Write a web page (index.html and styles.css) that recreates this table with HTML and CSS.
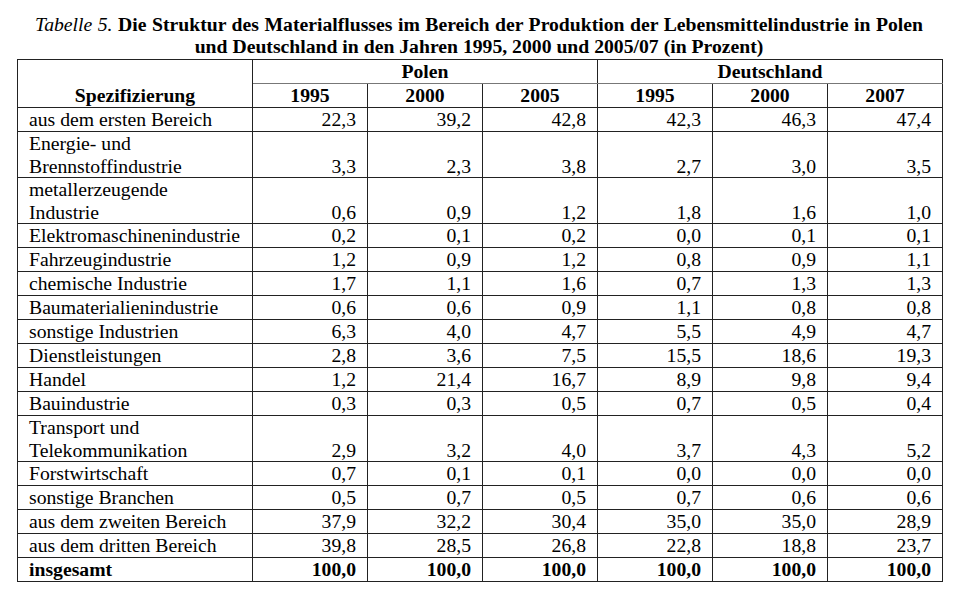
FILE: index.html
```html
<!DOCTYPE html>
<html lang="de">
<head>
<meta charset="utf-8">
<title>Tabelle 5</title>
<link rel="stylesheet" href="styles.css">
</head>
<body>
<div class="page">
  <div class="caption">
    <p class="cap-line cap-first"><span class="cap-label">Tabelle 5.</span> Die Struktur des Materialflusses im Bereich der Produktion der Lebensmittelindustrie in Polen</p>
    <p class="cap-line cap-last">und Deutschland in den Jahren 1995, 2000 und 2005/07 (in Prozent)</p>
  </div>
  <table class="data">
    <colgroup>
      <col class="c-label">
      <col class="c-num"><col class="c-num"><col class="c-num">
      <col class="c-num"><col class="c-num"><col class="c-num">
    </colgroup>
    <thead>
      <tr class="h1">
        <th rowspan="2" class="spec">Spezifizierung</th>
        <th colspan="3" class="grp">Polen</th>
        <th colspan="3" class="grp">Deutschland</th>
      </tr>
      <tr class="h2">
        <th class="yr">1995</th><th class="yr soft">2000</th><th class="yr">2005</th>
        <th class="yr">1995</th><th class="yr">2000</th><th class="yr">2007</th>
      </tr>
    </thead>
    <tbody>
      <tr><td>aus dem ersten Bereich</td><td>22,3</td><td>39,2</td><td>42,8</td><td>42,3</td><td>46,3</td><td>47,4</td></tr>
      <tr class="dbl"><td>Energie- und<br>Brennstoffindustrie</td><td>3,3</td><td>2,3</td><td>3,8</td><td>2,7</td><td>3,0</td><td>3,5</td></tr>
      <tr class="dbl"><td>metallerzeugende<br>Industrie</td><td>0,6</td><td>0,9</td><td>1,2</td><td>1,8</td><td>1,6</td><td>1,0</td></tr>
      <tr><td>Elektromaschinenindustrie</td><td>0,2</td><td>0,1</td><td>0,2</td><td>0,0</td><td>0,1</td><td>0,1</td></tr>
      <tr><td>Fahrzeugindustrie</td><td>1,2</td><td>0,9</td><td>1,2</td><td>0,8</td><td>0,9</td><td>1,1</td></tr>
      <tr><td>chemische Industrie</td><td>1,7</td><td>1,1</td><td>1,6</td><td>0,7</td><td>1,3</td><td>1,3</td></tr>
      <tr><td>Baumaterialienindustrie</td><td>0,6</td><td>0,6</td><td>0,9</td><td>1,1</td><td>0,8</td><td>0,8</td></tr>
      <tr><td>sonstige Industrien</td><td>6,3</td><td>4,0</td><td>4,7</td><td>5,5</td><td>4,9</td><td>4,7</td></tr>
      <tr><td>Dienstleistungen</td><td>2,8</td><td>3,6</td><td>7,5</td><td>15,5</td><td>18,6</td><td>19,3</td></tr>
      <tr><td>Handel</td><td>1,2</td><td>21,4</td><td>16,7</td><td>8,9</td><td>9,8</td><td>9,4</td></tr>
      <tr><td>Bauindustrie</td><td>0,3</td><td>0,3</td><td>0,5</td><td>0,7</td><td>0,5</td><td>0,4</td></tr>
      <tr class="dbl"><td>Transport und<br>Telekommunikation</td><td>2,9</td><td>3,2</td><td>4,0</td><td>3,7</td><td>4,3</td><td>5,2</td></tr>
      <tr><td>Forstwirtschaft</td><td>0,7</td><td>0,1</td><td>0,1</td><td>0,0</td><td>0,0</td><td>0,0</td></tr>
      <tr><td>sonstige Branchen</td><td>0,5</td><td>0,7</td><td>0,5</td><td>0,7</td><td>0,6</td><td>0,6</td></tr>
      <tr><td>aus dem zweiten Bereich</td><td>37,9</td><td>32,2</td><td>30,4</td><td>35,0</td><td>35,0</td><td>28,9</td></tr>
      <tr><td>aus dem dritten Bereich</td><td>39,8</td><td>28,5</td><td>26,8</td><td>22,8</td><td>18,8</td><td>23,7</td></tr>
      <tr class="total"><td>insgesamt</td><td>100,0</td><td>100,0</td><td>100,0</td><td>100,0</td><td>100,0</td><td>100,0</td></tr>
    </tbody>
  </table>
</div>
</body>
</html>
```

FILE: styles.css
```css
html, body {
  margin: 0;
  padding: 0;
  background: #ffffff;
}

body {
  font-family: "Liberation Serif", serif;
  font-size: 19.7px;
  color: #000000;
}

.page {
  width: 923px;
  margin: 0 0 0 17px;
  padding-top: 13px;
}

.caption {
  margin: 0 17px 2px 18px;
  font-weight: bold;
  line-height: 22px;
}

.cap-line {
  margin: 0;
  white-space: nowrap;
}

.cap-first {
  text-align: justify;
  text-align-last: justify;
  white-space: normal;
}

.cap-last {
  text-align: center;
}

.cap-label {
  font-style: italic;
  font-weight: normal;
}

.data {
  width: 923px;
  border-collapse: collapse;
  table-layout: fixed;
  border: 1px solid #777777;
}

.c-label { width: 235px; }
.c-num { width: 115px; }

.data th,
.data td {
  border: 1px solid #222222;
  padding: 0 11px;
  line-height: 23px;
  vertical-align: bottom;
}

.data tr.dbl td {
  line-height: 22.5px;
}

.data th {
  font-weight: bold;
  text-align: center;
}

.data tr.h1 th.grp {
  border-bottom-color: #777777;
}

.data th.soft {
  border-left-color: #777777;
}

.data td {
  text-align: right;
  white-space: nowrap;
}

.data td:first-child {
  text-align: left;
}

.data tr.total td {
  font-weight: bold;
}
```
